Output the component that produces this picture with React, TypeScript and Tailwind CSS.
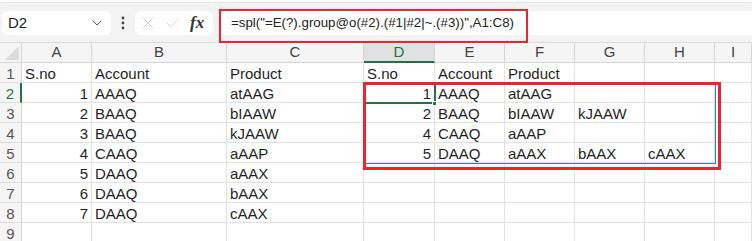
import { ChevronDown, X, Check } from 'lucide-react';

const cols = ['A', 'B', 'C', 'D', 'E', 'F', 'G', 'H', 'I'];
const widths = ['w-[70px]', 'w-[135px]', 'w-[137px]', 'w-[71px]', 'w-[70px]', 'w-[70px]', 'w-[70px]', 'w-[70px]', 'w-[37px]'];

// number cells are right aligned, like excel does
const rows: (string | number)[][] = [
  ['S.no', 'Account', 'Product', 'S.no', 'Account', 'Product', '', '', ''],
  [1, 'AAAQ', 'atAAG', 1, 'AAAQ', 'atAAG', '', '', ''],
  [2, 'BAAQ', 'bIAAW', 2, 'BAAQ', 'bIAAW', 'kJAAW', '', ''],
  [3, 'BAAQ', 'kJAAW', 4, 'CAAQ', 'aAAP', '', '', ''],
  [4, 'CAAQ', 'aAAP', 5, 'DAAQ', 'aAAX', 'bAAX', 'cAAX', ''],
  [5, 'DAAQ', 'aAAX', '', '', '', '', '', ''],
  [6, 'DAAQ', 'bAAX', '', '', '', '', '', ''],
  [7, 'DAAQ', 'cAAX', '', '', '', '', '', ''],
  ['', '', '', '', '', '', '', '', ''],
];

function Toolbar() {
  return (
    <div className="relative h-[42px] bg-[#f3f3f3]">
      <div className="h-[3px] bg-white rounded-b-md border-b border-[#e6e6e6]" />
      <div className="flex items-center pt-2 pl-[2px]">
        <div className="flex h-6 w-[109px] items-center justify-between rounded-md bg-white pl-[6px] pr-[6px] text-[15px] text-[#222]">
          <span>D2</span>
          <ChevronDown className="h-4 w-4 text-[#555]" strokeWidth={1.5} />
        </div>
        <div className="flex w-[24px] justify-center">
          <svg width="4" height="14" viewBox="0 0 4 14">
            <circle cx="2" cy="2" r="1.4" fill="#444" />
            <circle cx="2" cy="7" r="1.4" fill="#444" />
            <circle cx="2" cy="12" r="1.4" fill="#444" />
          </svg>
        </div>
        <div className="flex h-6 w-[78px] items-center rounded-md bg-white pl-[4px]">
          <X className="h-[18px] w-[18px] text-[#c8c8c8]" strokeWidth={1.1} />
          <Check className="ml-[7px] h-[18px] w-[18px] text-[#c8c8c8]" strokeWidth={1.1} />
          <span className="ml-[8px] font-['Liberation_Serif'] text-[17px] font-bold italic text-[#333]">fx</span>
        </div>
        <div className="ml-[7px] flex h-6 flex-1 items-center rounded-l-md bg-white pl-[11px] text-[13.3px] text-[#222]">
          =spl("=E(?).group@o(#2).(#1|#2|~.(#3))",A1:C8)
        </div>
      </div>
      <div className="absolute left-[219px] top-[9px] h-[34px] w-[309px] border-2 border-[#e8262b]" />
    </div>
  );
}

export default function App() {
  return (
    <div className="relative h-[241px] w-[752px] overflow-hidden bg-white font-['Liberation_Sans',sans-serif]">
      <Toolbar />
      {/* header row */}
      <div className="flex h-[21px] bg-[#f5f5f5] border-t border-[#dcdcdc]">
        <div className="relative w-[22px] shrink-0 border-r border-b border-[#d6d6d6]">
          <svg className="absolute bottom-[2px] right-[2px]" width="14" height="14">
            <polygon points="14,0 14,14 0,14" fill="#dcdcdc" />
          </svg>
        </div>
        {cols.map((c, i) => (
          <div
            key={c}
            className={`${widths[i]} shrink-0 flex items-center justify-center text-[15px] border-r border-[#d6d6d6] ${
              c === 'D' ? 'bg-[#e1e1e1] text-[#217346] border-b-2 border-b-[#217346]' : 'text-[#444] border-b'
            }`}
          >
            {c}
          </div>
        ))}
      </div>
      {rows.map((r, ri) => (
        <div key={ri} className="flex h-[20px]">
          <div
            className={`w-[22px] shrink-0 flex items-end justify-center leading-[17px] text-[15px] bg-[#f5f5f5] border-b border-[#dcdcdc] ${
              ri === 1 ? 'text-[#217346] border-r-2 border-r-[#217346]' : 'text-[#555] border-r border-r-[#d6d6d6]'
            }`}
          >
            {ri + 1}
          </div>
          {r.map((v, ci) => (
            <div
              key={ci}
              className={`${widths[ci]} shrink-0 flex items-end whitespace-nowrap leading-[16px] text-[15px] text-[#1f1f1f] border-r border-b border-[#e1e1e1] px-[3px] ${
                typeof v === 'number' ? 'justify-end' : 'justify-start'
              }`}
            >
              {v}
            </div>
          ))}
        </div>
      ))}
      {/* spill range + selection + highlight box */}
      <div className="absolute left-[364px] top-[83px] h-[81px] w-[352px] border border-[#4472c4]" />
      <div className="absolute left-[363px] top-[82px] h-[22px] w-[73px] border-2 border-[#217346]" />
      <div className="absolute left-[432px] top-[101px] h-[5px] w-[5px] bg-[#217346] border border-white" />
      <div className="absolute left-[363px] top-[82px] h-[88px] w-[358px] border-[3px] border-[#e8262b]" />
    </div>
  );
}
